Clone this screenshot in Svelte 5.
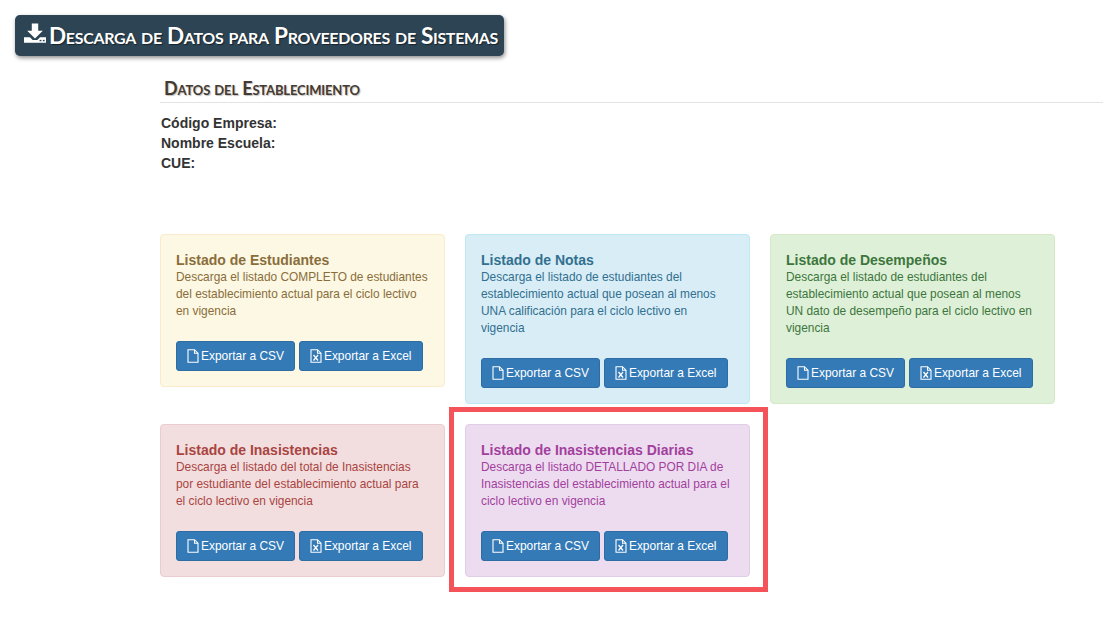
<script>
  const cards = [
    {
      tone: 'warning',
      title: 'Listado de Estudiantes',
      text: 'Descarga el listado COMPLETO de estudiantes del establecimiento actual para el ciclo lectivo en vigencia'
    },
    {
      tone: 'info',
      title: 'Listado de Notas',
      text: 'Descarga el listado de estudiantes del establecimiento actual que posean al menos UNA calificación para el ciclo lectivo en vigencia'
    },
    {
      tone: 'success',
      title: 'Listado de Desempeños',
      text: 'Descarga el listado de estudiantes del establecimiento actual que posean al menos UN dato de desempeño para el ciclo lectivo en vigencia'
    },
    {
      tone: 'danger',
      title: 'Listado de Inasistencias',
      text: 'Descarga el listado del total de Inasistencias por estudiante del establecimiento actual para el ciclo lectivo en vigencia'
    },
    {
      tone: 'purple',
      title: 'Listado de Inasistencias Diarias',
      text: 'Descarga el listado DETALLADO POR DIA de Inasistencias del establecimiento actual para el ciclo lectivo en vigencia',
      marked: true
    }
  ];
</script>

<div class="page">
  <h1 class="banner">
    <svg class="banner-icon" viewBox="0 0 24 21" width="22" height="20" aria-hidden="true">
      <path d="M8.500 0h7v8h5l-8.500 8.500L3.500 8h5z" fill="#fff" />
      <path d="M0 15h6.500l3 3h5l3-3H24v6H0z" fill="#fff" />
      <rect x="17" y="18" width="2" height="1.500" fill="#2c4454" />
      <rect x="20.500" y="18" width="2" height="1.500" fill="#2c4454" />
    </svg>
    <span>Descarga de Datos para Proveedores de Sistemas</span>
  </h1>

  <section class="content">
    <h2 class="section-title">Datos del Establecimiento</h2>
    <div class="details">
      <div>Código Empresa:</div>
      <div>Nombre Escuela:</div>
      <div>CUE:</div>
    </div>

    <div class="cards">
      {#each cards as card}
        <div class="card {card.tone}" class:marked={card.marked}>
          <h4>{card.title}</h4>
          <p>{card.text}</p>
          <div class="actions">
            <button>
              <svg viewBox="0 0 12 14" width="12" height="14" aria-hidden="true">
                <path d="M1 .7h6.500L11 4.200v9.100H1zM7.500.7v3.500H11" fill="none" stroke="#fff" stroke-width="1.100" />
              </svg>
              Exportar a CSV
            </button>
            <button>
              <svg viewBox="0 0 12 14" width="12" height="14" aria-hidden="true">
                <path d="M1 .7h6.500L11 4.200v9.100H1zM7.500.7v3.500H11" fill="none" stroke="#fff" stroke-width="1.100" />
                <path d="M3.500 6l4.500 5.500M8 6l-4.500 5.500" fill="none" stroke="#fff" stroke-width="1.300" />
              </svg>
              Exportar a Excel
            </button>
          </div>
          {#if card.marked}
            <div class="highlight"></div>
          {/if}
        </div>
      {/each}
    </div>
  </section>
</div>

<style>
  :global(body) {
    margin: 0;
    background: #fff;
  }

  .page {
    height: 621px;
    overflow: hidden;
    padding-top: 15px;
    box-sizing: border-box;
    font-family: "Liberation Sans", Arial, sans-serif;
    font-size: 11.9px;
    line-height: 17px;
    color: #333;
  }

  .banner {
    display: inline-flex;
    align-items: center;
    gap: 3px;
    height: 41px;
    box-sizing: border-box;
    margin: 0 0 0 15px;
    padding: 0 6px 0 9px;
    background: #2c4454;
    border-radius: 5px;
    box-shadow: 1px 2px 4px rgba(0, 0, 0, 0.45);
    font-family: Lato, sans-serif;
    font-variant: small-caps;
    font-size: 22.600px;
    font-weight: 700;
    letter-spacing: -0.33px;
    color: #fff;
    white-space: nowrap;
    text-shadow: 1px 1px 1px rgba(0, 0, 0, 0.5);
  }

  .banner-icon {
    margin-top: -6px;
  }

  .content {
    margin: 24px 0 0 160px;
  }

  .section-title {
    margin: 0;
    height: 22px;
    padding: 0 0 0 4px;
    border-bottom: 1px solid #e3e3e3;
    font-family: Lato, sans-serif;
    font-variant: small-caps;
    font-size: 18px;
    font-weight: 700;
    letter-spacing: -0.16px;
    line-height: 17px;
    color: #453a30;
    text-shadow: 1px 1px 1px rgba(0, 0, 0, 0.25);
  }

  .details {
    margin: 10px 0 0 1px;
    font-size: 14px;
    font-weight: 700;
    line-height: 20px;
    color: #333;
  }

  .cards {
    display: grid;
    grid-template-columns: repeat(3, 285px);
    gap: 20px;
    align-items: start;
    margin-top: 61px;
  }

  .card {
    position: relative;
    box-sizing: border-box;
    padding: 15px;
    border: 1px solid;
    border-radius: 4px;
  }

  .card h4 {
    margin: 2px 0 0;
    font-size: 14px;
    font-weight: 700;
    line-height: 17px;
  }

  .card p {
    margin: 0 0 21px;
  }

  .actions {
    display: flex;
    gap: 4px;
  }

  button {
    display: flex;
    align-items: center;
    gap: 2px;
    height: 30px;
    padding: 0 10px;
    background: #337ab7;
    border: 1px solid #2e6da4;
    border-radius: 3px;
    font-family: inherit;
    font-size: 11.950px;
    color: #fff;
    white-space: nowrap;
  }

  .warning {
    background: #fcf8e3;
    border-color: #faebcc;
    color: #8a6d3b;
  }

  .info {
    background: #d9edf7;
    border-color: #bce8f1;
    color: #31708f;
  }

  .success {
    background: #dff0d8;
    border-color: #d6e9c6;
    color: #3c763d;
  }

  .danger {
    background: #f2dede;
    border-color: #ebccd1;
    color: #a94442;
  }

  .purple {
    background: #eddcf0;
    border-color: #e0cde6;
    color: #a23f9d;
  }

  .highlight {
    position: absolute;
    inset: -18px -19px -16px -17px;
    border: 5px solid #f4535a;
    pointer-events: none;
  }
</style>
